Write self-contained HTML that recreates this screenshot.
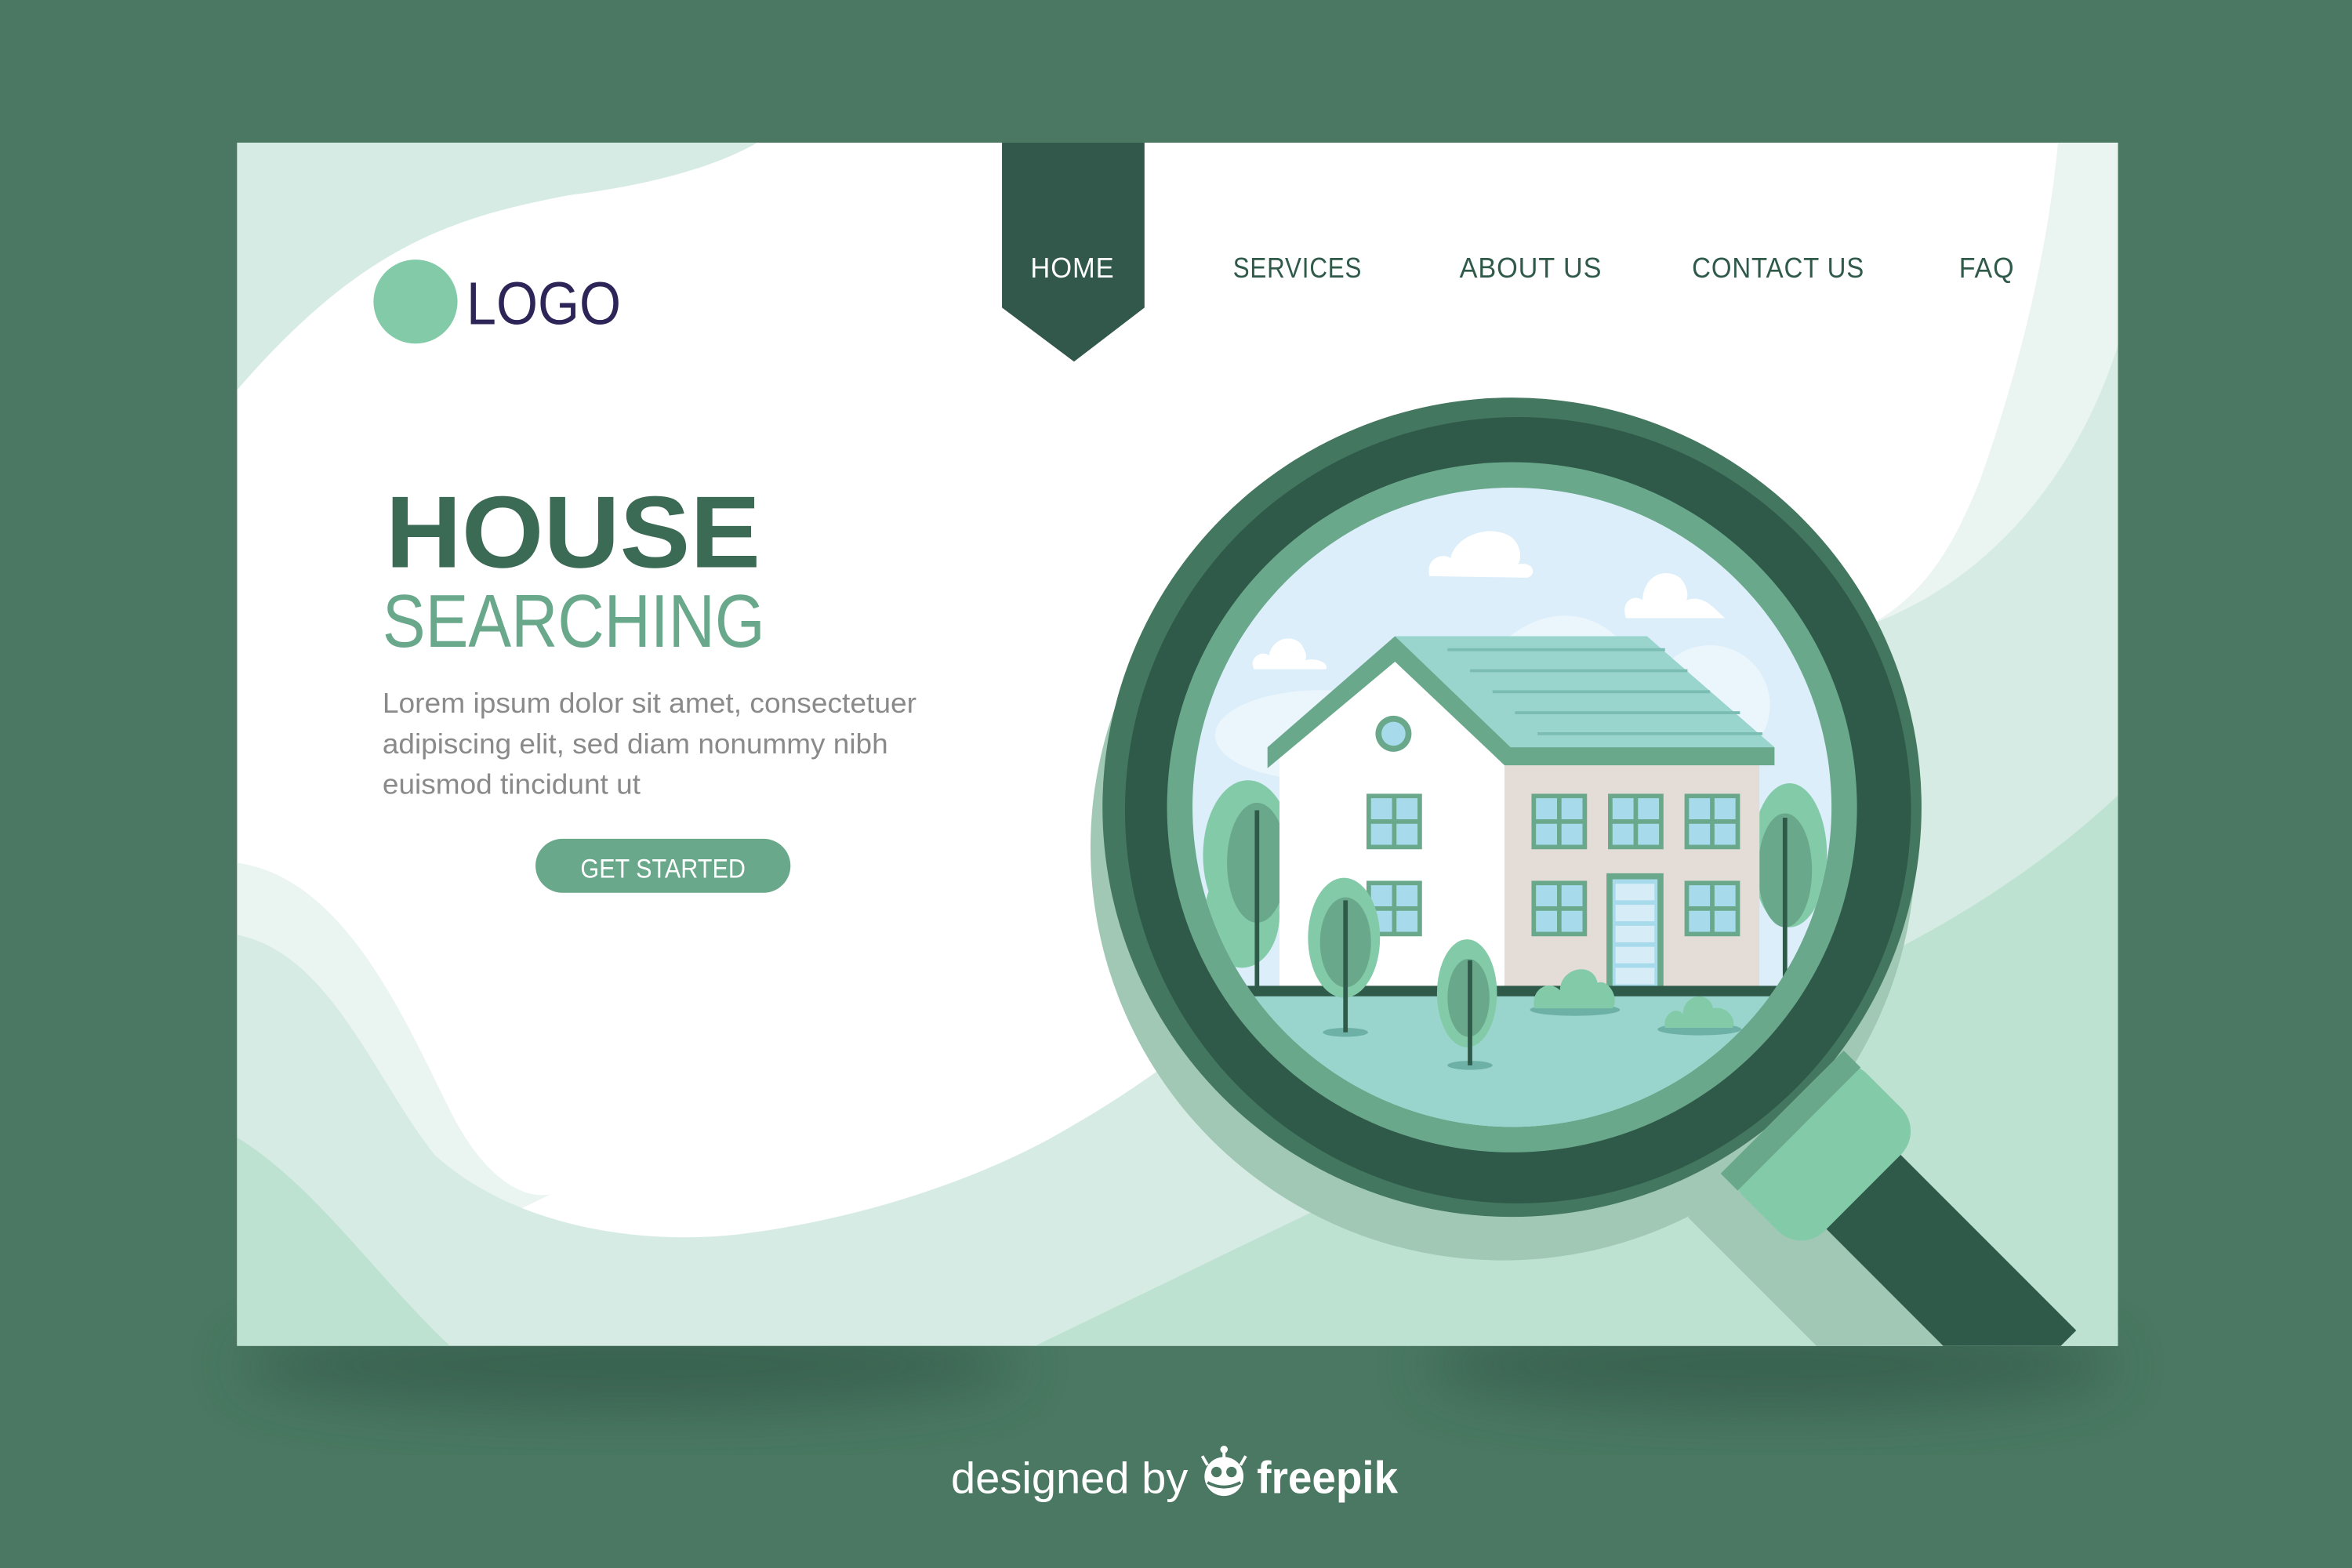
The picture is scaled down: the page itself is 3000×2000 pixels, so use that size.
<!DOCTYPE html>
<html><head><meta charset="utf-8"><style>
html,body{margin:0;padding:0;background:#4a7862;}
svg{display:block;}
</style></head><body>
<svg width="3000" height="2000" viewBox="0 0 1568 1045" preserveAspectRatio="none" xmlns="http://www.w3.org/2000/svg" font-family="Liberation Sans, sans-serif">
<defs>
<clipPath id="card"><rect x="158" y="95" width="1254" height="802"/></clipPath>
<clipPath id="lens"><circle cx="1008" cy="538" r="213"/></clipPath>
<filter id="blur" x="-50%" y="-50%" width="200%" height="200%"><feGaussianBlur stdDeviation="18"/></filter>
</defs>
<rect width="1568" height="1045" fill="#4a7862"/>
<ellipse cx="420" cy="910" rx="260" ry="30" fill="#2f5444" opacity="0.6" filter="url(#blur)"/>
<ellipse cx="1180" cy="910" rx="230" ry="30" fill="#2f5444" opacity="0.6" filter="url(#blur)"/>
<g clip-path="url(#card)">
<rect x="158" y="95" width="1254" height="802" fill="#ffffff"/>
<path d="M158,95 L505,95 C470,115 420,125 380,130 C300,145 240,165 158,260 Z" fill="#d6ebe3"/>
<path d="M1372,95 L1412,95 L1412,897 L1200,897 L1240,420 C1280,400 1300,370 1320,320 C1345,250 1365,170 1372,95 Z" fill="#eaf4f0"/>
<path d="M1412,230 C1390,300 1340,380 1250,415 L1250,897 L1412,897 Z" fill="#d6ebe3"/>
<path d="M158,575 C230,585 270,680 300,740 C320,780 345,800 367,796 L158,897 Z" fill="#eaf4f0"/>
<path d="M158,623 C220,635 250,720 290,770 C340,815 420,830 489,823 C560,815 650,790 717,749 C820,690 900,600 1000,540 C1100,470 1200,430 1280,410 L1412,340 L1412,897 L158,897 Z" fill="#d6ebe3"/>
<path d="M158,758 C210,790 250,850 300,897 L158,897 Z" fill="#bde2d2"/>
<path d="M690,897 C850,820 1050,720 1250,640 C1330,600 1380,560 1412,530 L1412,897 Z" fill="#bde2d2"/>
<!-- magnifier shadow -->
<circle cx="1002" cy="565" r="275" fill="#a0c8b5"/>
<g transform="translate(1165,800) rotate(45)"><rect x="-20" y="-36" width="200" height="72" fill="#a0c8b5"/></g>
<!-- handle -->
<g transform="translate(1218,770) rotate(45)"><rect x="0" y="-35" width="200" height="70" fill="#2f5a4a"/></g>
<!-- ring -->
<circle cx="1008" cy="538" r="273" fill="#44775f"/>
<circle cx="1012" cy="540" r="262" fill="#2f5a4a"/>
<circle cx="1008" cy="538" r="230" fill="#6aa88c"/>
<!-- collar -->
<g transform="translate(1215,768) rotate(45)">
<rect x="-38" y="-58" width="76" height="116" rx="22" fill="#83cba8"/>
<rect x="-38" y="-58" width="16" height="116" fill="#6aa88c"/>
</g>
<g clip-path="url(#lens)">
<rect x="790" y="320" width="440" height="440" fill="#dceefa"/>
<ellipse cx="880" cy="490" rx="70" ry="30" fill="#eaf5fc"/>
<path d="M1000,430 C1030,400 1070,405 1090,440 Z" fill="#eaf5fc"/>
<ellipse cx="1140" cy="470" rx="40" ry="40" fill="#eaf5fc"/>
<g fill="#ffffff">
<path d="M953,384 C950,372 962,368 967,372 C970,358 990,350 1004,356 C1014,360 1015,372 1012,376 C1024,374 1024,384 1018,385 Z"/>
<path d="M1084,412 C1080,400 1090,396 1095,400 C1096,383 1110,378 1120,385 C1125,390 1126,398 1124,400 C1136,396 1142,405 1150,412 Z"/>
<path d="M836,446 C832,438 842,433 846,437 C848,425 862,422 868,430 C870,434 872,437 870,440 C880,438 886,443 884,446 Z"/>
</g>
<g>
<ellipse cx="832" cy="570" rx="30" ry="50" fill="#83cba8"/>
<ellipse cx="828" cy="610" rx="25" ry="35" fill="#83cba8"/>
<ellipse cx="838" cy="575" rx="20" ry="40" fill="#6aa88c"/>
<line x1="838" y1="540" x2="838" y2="660" stroke="#2f5a4a" stroke-width="3"/>
<ellipse cx="1193" cy="570" rx="25" ry="48" fill="#83cba8"/>
<ellipse cx="1190" cy="580" rx="18" ry="38" fill="#6aa88c"/>
<line x1="1190" y1="545" x2="1190" y2="660" stroke="#2f5a4a" stroke-width="3"/>
</g>
<polygon points="853,505 930,435 1003,505 1003,660 853,660" fill="#ffffff"/>
<rect x="1003" y="505" width="170" height="155" fill="#e4ddd7"/>
<polygon points="930,424 1098,424 1183,498 1003,498" fill="#99d5cc"/>
<g stroke="#7bbdb3" stroke-width="2">
<line x1="965" y1="433" x2="1110" y2="433"/><line x1="980" y1="447" x2="1125" y2="447"/><line x1="995" y1="461" x2="1140" y2="461"/><line x1="1010" y1="475" x2="1160" y2="475"/><line x1="1025" y1="489" x2="1175" y2="489"/>
</g>
<polygon points="845,498 930,424 1007,498 1183,498 1183,510 1003,510 930,441 845,512" fill="#6aa88c"/>
<circle cx="929" cy="489" r="12" fill="#6aa88c"/><circle cx="929" cy="489" r="8" fill="#a7dbeb"/>
<g fill="#6aa88c">
<rect x="911" y="529" width="37" height="37"/><rect x="1021" y="529" width="37" height="37"/><rect x="1072" y="529" width="37" height="37"/><rect x="1123" y="529" width="37" height="37"/>
<rect x="911" y="587" width="37" height="37"/><rect x="1021" y="587" width="37" height="37"/><rect x="1123" y="587" width="37" height="37"/>
<rect x="1071" y="582" width="38" height="78"/>
</g>
<g fill="#a7dbeb">
<path d="M914,532h14v14h-14zM931,532h14v14h-14zM914,549h14v14h-14zM931,549h14v14h-14z"/>
<path d="M1024,532h14v14h-14zM1041,532h14v14h-14zM1024,549h14v14h-14zM1041,549h14v14h-14z"/>
<path d="M1075,532h14v14h-14zM1092,532h14v14h-14zM1075,549h14v14h-14zM1092,549h14v14h-14z"/>
<path d="M1126,532h14v14h-14zM1143,532h14v14h-14zM1126,549h14v14h-14zM1143,549h14v14h-14z"/>
<path d="M914,590h14v14h-14zM931,590h14v14h-14zM914,607h14v14h-14zM931,607h14v14h-14z"/>
<path d="M1024,590h14v14h-14zM1041,590h14v14h-14zM1024,607h14v14h-14zM1041,607h14v14h-14z"/>
<path d="M1126,590h14v14h-14zM1143,590h14v14h-14zM1126,607h14v14h-14zM1143,607h14v14h-14z"/>
<rect x="1075" y="586" width="30" height="74"/>
</g>
<g fill="#d6ecf7"><rect x="1077" y="589" width="26" height="11"/><rect x="1077" y="603" width="26" height="11"/><rect x="1077" y="617" width="26" height="11"/><rect x="1077" y="631" width="26" height="11"/><rect x="1077" y="645" width="26" height="11"/></g>
<rect x="790" y="660" width="440" height="110" fill="#99d5cc"/>
<rect x="790" y="657" width="440" height="7" fill="#2f5a4a"/>
<ellipse cx="897" cy="688" rx="15" ry="3" fill="#6db0a6"/>
<ellipse cx="896" cy="625" rx="24" ry="40" fill="#83cba8"/>
<ellipse cx="897" cy="628" rx="17" ry="30" fill="#6aa88c"/>
<line x1="897" y1="600" x2="897" y2="688" stroke="#2f5a4a" stroke-width="3"/>
<ellipse cx="980" cy="710" rx="15" ry="3" fill="#6db0a6"/>
<ellipse cx="978" cy="662" rx="20" ry="36" fill="#83cba8"/>
<ellipse cx="979" cy="665" rx="14" ry="26" fill="#6aa88c"/>
<line x1="980" y1="640" x2="980" y2="710" stroke="#2f5a4a" stroke-width="3"/>
<ellipse cx="1050" cy="673" rx="30" ry="4" fill="#6db0a6"/>
<path d="M1023,672 C1020,660 1032,652 1040,660 C1040,645 1062,640 1065,655 C1072,652 1080,665 1075,672 Z" fill="#83cba8"/>
<ellipse cx="1133" cy="686" rx="28" ry="4" fill="#6db0a6"/>
<path d="M1110,685 C1108,676 1118,670 1122,676 C1122,662 1140,660 1142,672 C1152,670 1158,680 1155,685 Z" fill="#83cba8"/>
</g>
</g>
<path d="M668,95 L763,95 L763,205 L716,241 L668,205 Z" fill="#31584a"/>
<g font-size="19" letter-spacing="0.5">
<text x="687" y="185" fill="#ffffff" textLength="56" lengthAdjust="spacingAndGlyphs">HOME</text>
<text x="822" y="185" fill="#2f5a4a" textLength="86" lengthAdjust="spacingAndGlyphs">SERVICES</text>
<text x="973" y="185" fill="#2f5a4a" textLength="95" lengthAdjust="spacingAndGlyphs">ABOUT US</text>
<text x="1128" y="185" fill="#2f5a4a" textLength="115" lengthAdjust="spacingAndGlyphs">CONTACT US</text>
<text x="1306" y="185" fill="#2f5a4a" textLength="37" lengthAdjust="spacingAndGlyphs">FAQ</text>
</g>
<circle cx="277" cy="201" r="28" fill="#83cba8"/>
<text x="311" y="216" font-size="40" fill="#2d2458" textLength="103" lengthAdjust="spacingAndGlyphs">LOGO</text>
<text x="257" y="378" font-size="68" font-weight="bold" fill="#3b6a55" textLength="250" lengthAdjust="spacingAndGlyphs">HOUSE</text>
<text x="255" y="431" font-size="50" fill="#6aa88c" textLength="255" lengthAdjust="spacingAndGlyphs">SEARCHING</text>
<g font-size="19" fill="#8a8a8a">
<text x="255" y="475" textLength="356" lengthAdjust="spacingAndGlyphs">Lorem ipsum dolor sit amet, consectetuer</text>
<text x="255" y="502" textLength="337" lengthAdjust="spacingAndGlyphs">adipiscing elit, sed diam nonummy nibh</text>
<text x="255" y="529" textLength="172" lengthAdjust="spacingAndGlyphs">euismod tincidunt ut</text>
</g>
<rect x="357" y="559" width="170" height="36" rx="18" fill="#6aa88c"/>
<text x="387" y="585" font-size="18" fill="#ffffff" textLength="110" lengthAdjust="spacingAndGlyphs">GET STARTED</text>
<text x="634" y="995" font-size="29" fill="#ffffff" textLength="158" lengthAdjust="spacingAndGlyphs">designed by</text>
<g fill="#ffffff">
<circle cx="816" cy="984" r="13"/>
<circle cx="816" cy="966" r="2.5"/><rect x="815" y="966" width="2" height="6"/>
<rect x="802" y="970" width="2" height="7" transform="rotate(-30 803 973)"/>
<rect x="828" y="970" width="2" height="7" transform="rotate(30 829 973)"/>
</g>
<circle cx="811" cy="981" r="3.5" fill="#4a7862"/><circle cx="821" cy="981" r="3.5" fill="#4a7862"/>
<path d="M805,988 Q816,994 827,988" stroke="#4a7862" stroke-width="2" fill="none"/>
<text x="838" y="995" font-size="30" font-weight="bold" fill="#ffffff" textLength="94" lengthAdjust="spacingAndGlyphs">freepik</text>
</svg>
</body></html>
